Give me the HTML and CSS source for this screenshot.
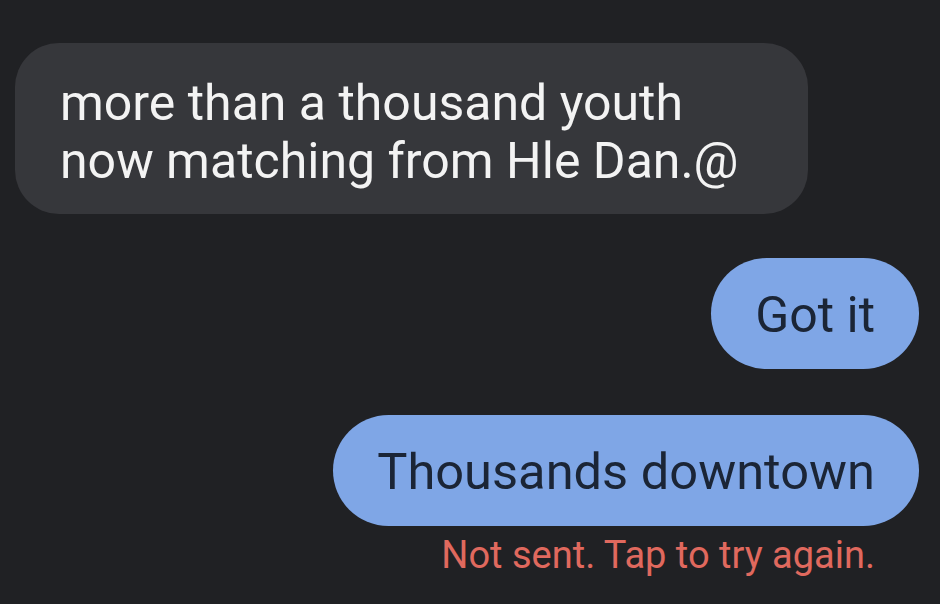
FILE: index.html
```html
<!DOCTYPE html>
<html lang="en">
<head>
<meta charset="utf-8">
<title>Messages</title>
<link rel="stylesheet" href="styles.css">
</head>
<body>
<main class="thread">
  <div class="bubble incoming">more than a thousand youth<br>now matching from Hle Dan.@</div>
  <div class="bubble outgoing first">Got it</div>
  <div class="bubble outgoing second">Thousands downtown</div>
  <div class="status">Not sent. Tap to try again.</div>
</main>
</body>
</html>
```
FILE: styles.css
```css
html, body {
  margin: 0;
  padding: 0;
  background: #202124;
  width: 940px;
  height: 604px;
  overflow: hidden;
}
.thread {
  display: flex;
  flex-direction: column;
  align-items: flex-start;
  padding: 43px 21px 0 15px;
  font-family: Roboto, "Liberation Sans", sans-serif;
}
.bubble {
  font-size: 50px;
  line-height: 58px;
  box-sizing: border-box;
  white-space: nowrap;
}
.incoming {
  width: 793px;
  background: #36373b;
  color: #f3f3f3;
  border-radius: 44px;
  padding: 31px 40px 24px 45px;
}
.outgoing {
  align-self: flex-end;
  background: #7fa6e6;
  color: #1b2536;
  border-radius: 56px;
  padding: 28px 44px 25px 44px;
}
.first {
  margin-top: 44px;
}
.second {
  margin-top: 46px;
  font-size: 50.6px;
}
.status {
  align-self: flex-end;
  margin-top: 7px;
  margin-right: 44px;
  font-size: 38px;
  line-height: 44px;
  color: #e0695e;
}
```
